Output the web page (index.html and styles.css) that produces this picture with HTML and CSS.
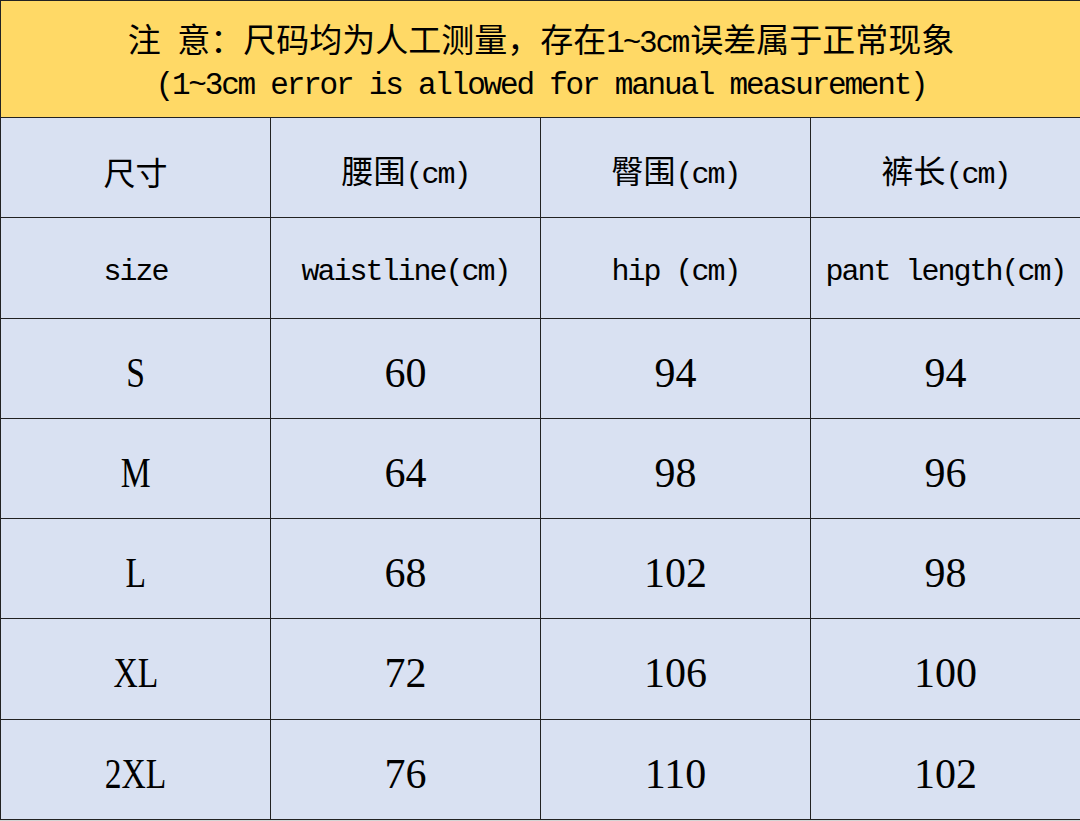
FILE: index.html
```html
<!DOCTYPE html>
<html lang="zh-CN">
<head>
<meta charset="utf-8">
<title>尺码表</title>
<link rel="stylesheet" href="styles.css">
</head>
<body>
<div class="sheet">
  <div class="notice">
    <div class="line l1"><span class="txt"><span class="zh">注&ensp;意：尺码均为人工测量，存在</span><span class="en">1~3cm</span><span class="zh">误差属于正常现象</span></span></div>
    <div class="line l2"><span class="txt"><span class="en">(1~3cm error is allowed for manual measurement)</span></span></div>
  </div>
  <div class="grid">
    <div class="cell"><span class="txt"><span class="zh">尺寸</span></span></div>
    <div class="cell"><span class="txt"><span class="zh">腰围</span><span class="en">(cm)</span></span></div>
    <div class="cell"><span class="txt"><span class="zh">臀围</span><span class="en">(cm)</span></span></div>
    <div class="cell"><span class="txt"><span class="zh">裤长</span><span class="en">(cm)</span></span></div>

    <div class="cell"><span class="txt"><span class="en">size</span></span></div>
    <div class="cell"><span class="txt"><span class="en">waistline(cm)</span></span></div>
    <div class="cell"><span class="txt"><span class="en">hip&nbsp;(cm)</span></span></div>
    <div class="cell"><span class="txt"><span class="en">pant&nbsp;length(cm)</span></span></div>

    <div class="cell"><span class="num sz">S</span></div>
    <div class="cell"><span class="num">60</span></div>
    <div class="cell"><span class="num">94</span></div>
    <div class="cell"><span class="num">94</span></div>

    <div class="cell"><span class="num sz">M</span></div>
    <div class="cell"><span class="num">64</span></div>
    <div class="cell"><span class="num">98</span></div>
    <div class="cell"><span class="num">96</span></div>

    <div class="cell"><span class="num sz">L</span></div>
    <div class="cell"><span class="num">68</span></div>
    <div class="cell"><span class="num">102</span></div>
    <div class="cell"><span class="num">98</span></div>

    <div class="cell"><span class="num sz">XL</span></div>
    <div class="cell"><span class="num">72</span></div>
    <div class="cell"><span class="num">106</span></div>
    <div class="cell"><span class="num">100</span></div>

    <div class="cell"><span class="num sz">2XL</span></div>
    <div class="cell"><span class="num">76</span></div>
    <div class="cell"><span class="num">110</span></div>
    <div class="cell"><span class="num">102</span></div>
  </div>
</div>
</body>
</html>
```

FILE: styles.css
```css
html, body {
  margin: 0;
  padding: 0;
  background: #d4d4d4;
  overflow: hidden;
}

.sheet {
  width: 1080px;
  border-top: 1px solid #222;
  border-left: 1px solid #222;
  color: #000;
}

.notice {
  box-sizing: border-box;
  height: 117px;
  border-bottom: 1px solid #222;
  background: #ffd966;
  display: flex;
  flex-direction: column;
  align-items: center;
  justify-content: center;
  padding-top: 8px;
}

.line {
  height: 45px;
  display: flex;
  align-items: center;
  white-space: nowrap;
}

.txt {
  line-height: 1;
  white-space: nowrap;
}

.l1 .zh {
  font-family: "Noto Sans CJK SC", sans-serif;
  font-size: 33px;
}

.l1 .en,
.l2 .en {
  font-family: "Liberation Mono", monospace;
  font-size: 31px;
  letter-spacing: -2.2px;
}

.l1 .en {
  margin-right: 2px;
}

.grid {
  display: grid;
  grid-template-columns: 270px 270px 270px 270px;
  grid-template-rows: 100px 101px 100px 100px 100px 101px 100px;
  background: #d9e1f2;
}

.cell {
  box-sizing: border-box;
  border-right: 1px solid #222;
  border-bottom: 1px solid #222;
  display: flex;
  align-items: center;
  justify-content: center;
  padding-top: 8px;
  line-height: 1;
  white-space: nowrap;
}

.cell .zh {
  font-family: "Noto Sans CJK SC", sans-serif;
  font-size: 32px;
}

.cell .en {
  font-family: "Liberation Mono", monospace;
  font-size: 30px;
  letter-spacing: -2px;
}

.cell .num {
  font-family: "Liberation Serif", serif;
  font-size: 42px;
}

.cell .sz {
  display: inline-block;
  transform: scaleX(0.8);
}
```
